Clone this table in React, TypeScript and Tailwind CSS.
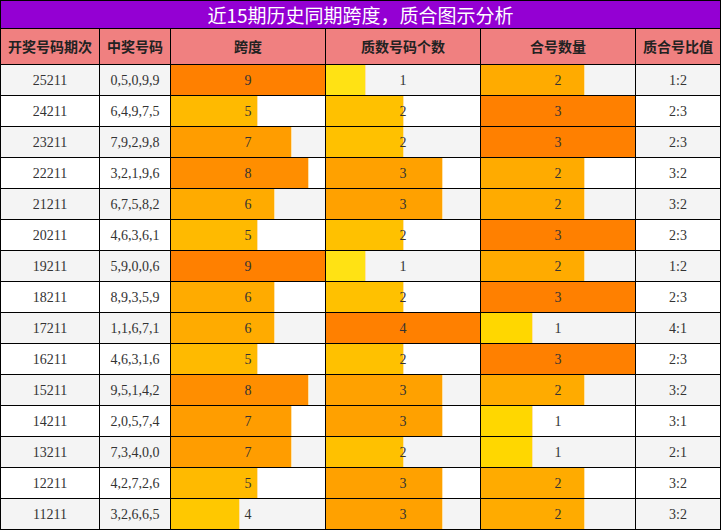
import React from "react";

type Row = { id: string; nums: string; span: number; prime: number; comp: number; ratio: string };

const rows: Row[] = [
  { id: "25211", nums: "0,5,0,9,9", span: 9, prime: 1, comp: 2, ratio: "1:2" },
  { id: "24211", nums: "6,4,9,7,5", span: 5, prime: 2, comp: 3, ratio: "2:3" },
  { id: "23211", nums: "7,9,2,9,8", span: 7, prime: 2, comp: 3, ratio: "2:3" },
  { id: "22211", nums: "3,2,1,9,6", span: 8, prime: 3, comp: 2, ratio: "3:2" },
  { id: "21211", nums: "6,7,5,8,2", span: 6, prime: 3, comp: 2, ratio: "3:2" },
  { id: "20211", nums: "4,6,3,6,1", span: 5, prime: 2, comp: 3, ratio: "2:3" },
  { id: "19211", nums: "5,9,0,0,6", span: 9, prime: 1, comp: 2, ratio: "1:2" },
  { id: "18211", nums: "8,9,3,5,9", span: 6, prime: 2, comp: 3, ratio: "2:3" },
  { id: "17211", nums: "1,1,6,7,1", span: 6, prime: 4, comp: 1, ratio: "4:1" },
  { id: "16211", nums: "4,6,3,1,6", span: 5, prime: 2, comp: 3, ratio: "2:3" },
  { id: "15211", nums: "9,5,1,4,2", span: 8, prime: 3, comp: 2, ratio: "3:2" },
  { id: "14211", nums: "2,0,5,7,4", span: 7, prime: 3, comp: 1, ratio: "3:1" },
  { id: "13211", nums: "7,3,4,0,0", span: 7, prime: 2, comp: 1, ratio: "2:1" },
  { id: "12211", nums: "4,2,7,2,6", span: 5, prime: 3, comp: 2, ratio: "3:2" },
  { id: "11211", nums: "3,2,6,6,5", span: 4, prime: 3, comp: 2, ratio: "3:2" },
];

function barColor(f: number) {
  const g = Math.round(128 + (1 - f) * 130);
  const gg = Math.min(g, 228);
  const b = f < 0.3 ? 20 : 0;
  return `rgb(255,${gg},${b})`;
}

function BarCell({ value, max, bg }: { value: number; max: number; bg: string }) {
  const f = value / max;
  const w = Math.round(f * 154);
  return (
    <div className={`relative h-[30px] w-[154px] ${bg}`}>
      <div
        className="absolute left-0 top-0 h-full"
        style={{
          width: `${w}px`,
          backgroundColor: barColor(f),
          boxShadow: f < 1 ? "1px 0 0 #ffe2a8" : undefined,
        }}
      />
      <div className="relative flex h-full items-center justify-center text-[14px] text-[#333]">{value}</div>
    </div>
  );
}

export default function App() {
  const serif = { fontFamily: '"Liberation Serif", "Noto Serif CJK SC", serif' };
  return (
    <div
      className="w-[721px] border-l border-t border-black bg-white"
      style={{ fontFamily: '"Noto Sans CJK SC", "Noto Sans", sans-serif' }}
    >
      <div className="flex h-[28px] items-center justify-center border-r border-b border-black bg-[#9400d3] text-[19px] leading-none text-white">
        近15期历史同期跨度，质合图示分析
      </div>
      <div className="flex h-[36px] bg-[#f08080] text-[14px] font-bold text-[#222]">
        <div className="flex w-[99px] items-center justify-center border-r border-b border-black">开奖号码期次</div>
        <div className="flex w-[71px] items-center justify-center border-r border-b border-black">中奖号码</div>
        <div className="flex w-[155px] items-center justify-center border-r border-b border-black">跨度</div>
        <div className="flex w-[155px] items-center justify-center border-r border-b border-black">质数号码个数</div>
        <div className="flex w-[155px] items-center justify-center border-r border-b border-black">合号数量</div>
        <div className="flex w-[85px] items-center justify-center border-r border-b border-black">质合号比值</div>
      </div>
      {rows.map((r, i) => {
        const bg = i % 2 === 0 ? "bg-[#f4f4f4]" : "bg-white";
        return (
          <div key={r.id} className={`flex h-[31px] border-b border-black ${bg}`} style={serif}>
            <div className="flex w-[99px] items-center justify-center border-r border-black text-[14px] text-[#333]">{r.id}</div>
            <div className="flex w-[71px] items-center justify-center border-r border-black text-[14px] text-[#333]">{r.nums}</div>
            <div className="w-[155px] border-r border-black"><BarCell value={r.span} max={9} bg={bg} /></div>
            <div className="w-[155px] border-r border-black"><BarCell value={r.prime} max={4} bg={bg} /></div>
            <div className="w-[155px] border-r border-black"><BarCell value={r.comp} max={3} bg={bg} /></div>
            <div className="flex w-[85px] items-center justify-center border-r border-black text-[14px] text-[#333]">{r.ratio}</div>
          </div>
        );
      })}
    </div>
  );
}
